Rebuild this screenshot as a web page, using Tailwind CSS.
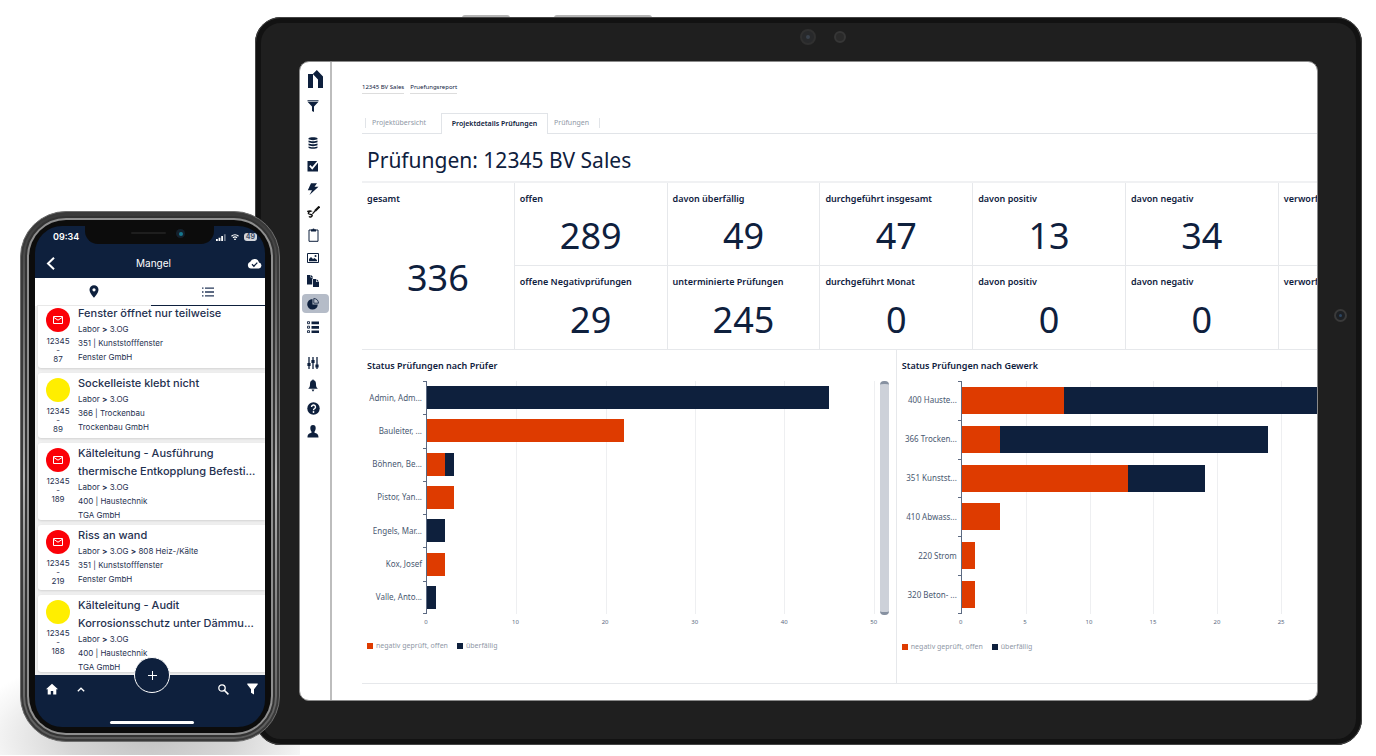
<!DOCTYPE html>
<html lang="de">
<head>
<meta charset="utf-8">
<meta name="viewport" content="width=device-width, initial-scale=1">
<title>Prüfungen: 12345 BV Sales</title>
<script src="https://cdn.jsdelivr.net/npm/@tailwindcss/browser@4"></script>
</head>
<body class="relative min-h-screen overflow-x-hidden bg-white text-[#0e203d] font-['Noto_Sans',sans-serif]">

<!-- Soft floor shadow below the phone -->
<div class="absolute left-0 top-[640px] h-[115px] w-[300px] bg-[radial-gradient(ellipse_62%_75%_at_50%_85%,#c4c4c4_0%,#d6d6d6_45%,#f6f6f6_85%,#ffffff_100%)]"></div>

<!-- Tablet -->
<section class="relative ml-[255px] mr-[14px] pt-[17px]" aria-label="Tablet">
  <div class="absolute left-[207px] top-[15px] h-[3px] w-[48px] rounded-t-sm bg-[#b5b5b5]"></div>
  <div class="absolute left-[299px] top-[15px] h-[3px] w-[98px] rounded-t-sm bg-[#b5b5b5]"></div>
  <div class="relative rounded-[26px] border-[6px] border-[#121212] bg-[#1f1f1f] px-[38px] py-[38px] outline outline-1 -outline-offset-1 outline-[#444444]">
    <div class="absolute left-[539px] top-[6px] size-4 rounded-full border-2 border-[#303030] bg-[#28292b] p-1"><div class="size-1 rounded-full bg-[#39414c]"></div></div>
    <div class="absolute left-[573px] top-[8px] size-3 rounded-full border-2 border-[#363636] bg-[#2a2a2a]"></div>
    <div class="absolute right-[9px] top-[286px] size-[13px] rounded-full border-2 border-[#3a3a3a] bg-[#1d2024] p-[3px]"><div class="size-[3px] rounded-full bg-[#2c4560]"></div></div>

    <div class="flex overflow-hidden rounded-[10px] border border-[#8a8a8a] bg-white">
      <!-- Icon rail -->
      <nav class="flex w-[32px] shrink-0 flex-col items-center border-r-2 border-[#bdbdbd] pt-[5px]" aria-label="Navigation">
        <a href="#" aria-label="Start" class="flex h-[24px] w-[27px] items-center justify-center"><svg class="h-[18px] w-[15px]" viewBox="0 0 15 18" fill="currentColor"><path d="M0 4h5v14H0zM4.800 4l4-4L15 6.500V18h-5V9.500z"/></svg></a>
        <button aria-label="Filter" class="flex h-[29px] w-[27px] items-center justify-center pr-1"><svg class="size-3" viewBox="0 0 12 12" fill="currentColor"><path d="M.5 0h11v1.200H.5z" opacity=".75"/><path d="M.5 1.700h11L7 6.500V12L5 11V6.500z"/></svg></button>
        <span class="h-[11px]"></span>
        <button aria-label="Datenbank" class="flex h-[23px] w-[27px] items-center justify-center pr-1"><svg class="h-3 w-[10px]" viewBox="0 0 10 12" fill="currentColor"><path d="M.5 1.300C2 0 8 0 9.500 1.300v1C8 3.400 2 3.400.5 2.300zM.5 3.500c2 1 7 1 9 0v1.800c-1.500 1.100-7.500 1.100-9 0zM.5 6.500c2 1 7 1 9 0v1.800c-1.500 1.100-7.500 1.100-9 0zM.5 9.400c2 1 7 1 9 0v1.300C8 12.200 2 12.200.5 10.700z"/></svg></button>
        <button aria-label="Aufgaben" class="flex h-[23px] w-[27px] items-center justify-center pr-1"><svg class="size-3" viewBox="0 0 12 12"><path d="M.5 1h10.500v10.500H.5z" fill="currentColor"/><path d="M2.800 5.700 5.200 8.300 11.500.8" fill="none" stroke="#fff" stroke-width="1.800"/></svg></button>
        <button aria-label="Aktionen" class="flex h-[23px] w-[27px] items-center justify-center pr-1"><svg class="size-3" viewBox="0 0 12 12" fill="currentColor"><path d="M4 .3h6L7.500 3.800H11.500L2.500 12 5 7.200H.8z"/></svg></button>
        <button aria-label="Unterschrift" class="flex h-[23px] w-[27px] items-center justify-center pr-1 text-[#111111]"><svg class="h-3 w-[13px]" viewBox="0 0 13 12" fill="none" stroke="currentColor"><path d="M12.500.5 8 5" stroke-width="2.200"/><path d="M8 5 5.500 7.800" stroke-width="1.200"/><path d="M.3 5c1.200.8 2-.4 3.500.2-2 .8-3.300 2-1.800 2.800s3.500.2 3.200 1.700-2.400 1.800-3.200.6" stroke-width="1.400"/></svg></button>
        <button aria-label="Klemmbrett" class="flex h-[23px] w-[27px] items-center justify-center pr-1"><svg class="h-[14px] w-[11px]" viewBox="0 0 11 14"><path d="M1 2h9v11.300H1z" fill="none" stroke="currentColor" stroke-width="1"/><path d="M3 3.500V1.500h1.500a1 1 0 0 1 2 0H8v2z" fill="currentColor"/></svg></button>
        <button aria-label="Bilder" class="flex h-[23px] w-[27px] items-center justify-center pr-1"><svg class="h-[10px] w-3" viewBox="0 0 12 10"><path d="M.5.5h11v9H.5z" fill="none" stroke="currentColor"/><path d="M2 8.200V6l2-2 2 2 1.500-1L10 7v1.200z" fill="currentColor"/><circle cx="8.500" cy="3" r="1" fill="currentColor"/></svg></button>
        <button aria-label="Dokumente" class="flex h-[23px] w-[27px] items-center justify-center pr-1"><svg class="size-3" viewBox="0 0 12 12" fill="currentColor"><path d="M0 0h3.500v2.500H6V3.500H5.200V9.500H0zM4 0l2 2H4z"/><path d="M6 4h3v3h3v5H6zM9.600 4 12 6.400H9.600z"/></svg></button>
        <button aria-label="Berichte" aria-current="page" class="flex h-[23px] w-[27px] items-center"><span class="flex h-[19px] w-[27px] items-center justify-center rounded-sm bg-[#b5bcc8] pr-1"><svg class="size-3" viewBox="0 0 12 12"><path d="M5.500 1a5.300 5.300 0 1 0 5.300 5.500H5.500z" fill="currentColor"/><path d="M6.800.5A5 5 0 0 1 11.500 5.200H6.800z" fill="#b5bcc8" stroke="currentColor" stroke-width=".8"/></svg></span></button>
        <button aria-label="Liste" class="flex h-[23px] w-[27px] items-center justify-center pr-1"><svg class="size-3" viewBox="0 0 12 12"><path d="M4.500.5H12v2.700H4.500zM4.500 5H12v2.700H4.500zM4.500 9.500H12V12H4.500z" fill="currentColor"/><path d="M.5.700h2v2h-2zM.5 5.200h2v2h-2zM.5 9.700h2v2h-2z" fill="none" stroke="currentColor" stroke-width=".9"/></svg></button>
        <span class="h-[13px]"></span>
        <button aria-label="Einstellungen" class="flex h-[23px] w-[27px] items-center justify-center pr-1"><svg class="size-3" viewBox="0 0 12 12"><path d="M2 0v12M6 0v12M10 0v12" stroke="currentColor" stroke-width="1.300"/><path d="M.4 6h3.200v3H.4zM4.400 3h3.200v3H4.400zM8.400 7.500h3.200v3H8.400z" fill="currentColor"/></svg></button>
        <button aria-label="Mitteilungen" class="flex h-[23px] w-[27px] items-center justify-center pr-1"><svg class="h-[13px] w-[10px]" viewBox="0 0 10 13" fill="currentColor"><path d="M5 0l.7 1.300C7.700 1.800 8 3.500 8 5.500s.5 3 1.800 4.300H.2C1.500 8.500 2 7.500 2 5.500s.3-3.700 2.300-4.200zM3.500 10.500h3L5 12.800z"/></svg></button>
        <button aria-label="Hilfe" class="flex h-[23px] w-[27px] items-center justify-center pr-1"><svg class="size-[13px]" viewBox="0 0 13 13"><circle cx="6.500" cy="6.500" r="6.200" fill="currentColor"/><path d="M4.500 5a2 2 0 1 1 3 1.700c-.8.400-1 .8-1 1.500" fill="none" stroke="#fff" stroke-width="1.400"/><circle cx="6.500" cy="10" r=".9" fill="#fff"/></svg></button>
        <button aria-label="Profil" class="flex h-[23px] w-[27px] items-center justify-center pr-1"><svg class="h-[13px] w-3" viewBox="0 0 12 13" fill="currentColor"><path d="M3.300 3a2.700 3 0 0 1 5.400 0c0 2-.7 2.800-1.200 3.700v1c2 .7 4 1 4 4.800H.5c0-3.800 2-4.100 4-4.800v-1C4 5.800 3.300 5 3.300 3z"/></svg></button>
      </nav>

      <!-- Report -->
      <main class="min-w-0 flex-1 overflow-hidden pb-[16px] pl-[30px] pt-[19px]">
        <div class="flex gap-[6px] text-[6px] leading-[12px] whitespace-nowrap">
          <a href="#" class="border-b border-[#dddddd]">12345 BV Sales</a>
          <a href="#" class="border-b border-[#dddddd]">Pruefungsreport</a>
        </div>
        <div class="mt-[19px] flex h-[21px] text-[7px] whitespace-nowrap text-[#8f98a6]" role="tablist">
          <button role="tab" class="flex w-[79px] items-center border-b border-[#e1e4e8] pl-[3px]"><span class="border-l border-[#e1e4e8] pl-[6px]">Projektübersicht</span></button>
          <button role="tab" aria-selected="true" class="w-[107px] border border-b-0 border-[#e1e4e8] font-semibold text-[#0e203d]">Projektdetails Prüfungen</button>
          <div class="flex flex-1 items-center border-b border-[#e1e4e8] pl-[6px]"><button role="tab" class="border-r border-[#e1e4e8] pr-[10px]">Prüfungen</button></div>
        </div>
        <h1 class="h-[47px] pl-[5px] pt-[5px] text-[21px] leading-[42px] whitespace-nowrap">Prüfungen: 12345 BV Sales</h1>

        <div class="grid grid-cols-[repeat(7,16%)] grid-rows-[83px_83px] border-t-2 border-[#f0f1f3]" id="kpis"></div>

        <div class="flex border-y border-[#e6e8eb]">
          <section class="w-[56%] shrink-0 border-r border-[#e6e8eb] pl-[5px] pr-[7px]">
            <h2 class="pt-[8px] text-[9px] leading-4 font-semibold">Status Prüfungen nach Prüfer</h2>
            <div class="mt-[7px] flex">
              <div class="mr-[6px] min-w-0 flex-1" id="chart-a"></div>
              <div class="h-[234px] w-[9px] rounded-sm border-y-[3px] border-[#8791a1] bg-[#cdd1d9]"></div>
            </div>
            <div class="mt-[10px] flex h-[42px] gap-[9px] text-[7px] leading-[12px] text-[#8f98a6]">
              <span class="flex h-3 items-center gap-[3px]"><i class="size-[6px] bg-[#de3b00]"></i>negativ geprüft, offen</span>
              <span class="flex h-3 items-center gap-[3px]"><i class="size-[6px] bg-[#0e203d]"></i>überfällig</span>
            </div>
          </section>
          <section class="min-w-0 flex-1 pl-[5px]">
            <h2 class="pt-[8px] text-[9px] leading-4 font-semibold">Status Prüfungen nach Gewerk</h2>
            <div class="mt-[7px]" id="chart-b"></div>
            <div class="mt-[11px] flex h-[42px] gap-[9px] text-[7px] leading-[12px] text-[#8f98a6]">
              <span class="flex h-3 items-center gap-[3px]"><i class="size-[6px] bg-[#de3b00]"></i>negativ geprüft, offen</span>
              <span class="flex h-3 items-center gap-[3px]"><i class="size-[6px] bg-[#0e203d]"></i>überfällig</span>
            </div>
          </section>
        </div>
      </main>
    </div>
  </div>
</section>

<!-- Phone, standing in front of the tablet -->
<section aria-label="Smartphone" class="absolute left-[20px] top-[211px] w-[260px] rounded-[46px] border border-[#6e6e6e] bg-[#3a3a3a] p-[2px] font-['Inter',sans-serif]">
 <div class="rounded-[43px] bg-linear-to-b from-[#3a3a3a] via-[#b4b4b4] to-[#5a5a5a] p-[2px]">
 <div class="rounded-[41px] border-2 border-[#333333] bg-[#8f8f8f] p-[2px]">
 <div class="rounded-[37px] bg-[#0c0c0c] p-[6px]">
  <div class="relative overflow-hidden rounded-[27px] bg-[#0e203d]">
    <div class="absolute left-[50px] top-0 h-[18px] w-[129px] rounded-b-[13px] bg-[#0c0c0c]">
      <div class="absolute left-[46px] top-[6px] h-[2px] w-[35px] rounded-full bg-[#1e1e1e]"></div>
      <div class="absolute left-[91px] top-[3px] flex size-[9px] items-center justify-center rounded-full bg-[#14202c]"><div class="size-1 rounded-full bg-[#16788f]"></div></div>
    </div>
    <div class="flex h-[22px] items-center justify-between pl-[18px] pr-[8px] text-white">
      <span class="text-[9px] font-semibold">09:34</span>
      <span class="flex items-center gap-[5px]">
        <svg class="h-[7px] w-[10px]" viewBox="0 0 10 7" fill="#fff"><path d="M0 5h1.800v2H0zM2.600 3.800h1.800V7H2.600zM5.200 2h1.800v5H5.200z"/><path d="M7.900.3h1.800V7H7.900z" opacity=".4"/></svg>
        <svg class="h-[6px] w-2" viewBox="0 0 8 6" fill="none" stroke="#fff"><path d="M.5 2.200a5 5 0 0 1 7 0M2 3.800a3 3 0 0 1 4 0" stroke-width="1.200"/><circle cx="4" cy="5.300" r=".5" fill="#fff"/></svg>
        <span class="rounded-[3px] bg-[#d3d6dc] px-[2px] text-[7px] leading-[8px] font-bold text-[#41506a]">49</span>
      </span>
    </div>
    <header class="flex h-[30px] items-center justify-between pl-[11px] pr-[3px] text-white">
      <button aria-label="Zurück"><svg class="h-[13px] w-[10px]" viewBox="0 0 10 13" fill="none" stroke="currentColor" stroke-width="2"><path d="M8 .8 2 6.500 8 12.200"/></svg></button>
      <h1 class="pl-1 text-[10px]">Mangel</h1>
      <button aria-label="Synchronisiert"><svg class="h-[11px] w-[15px]" viewBox="0 0 15 11"><path d="M4 10.500A3.500 3.500 0 0 1 3.300 3.700 4.600 4.600 0 0 1 12 4.600 3 3 0 0 1 12 10.500z" fill="#fff"/><path d="M5 6.300 6.900 8.200 10.300 4.600" fill="none" stroke="#0e203d" stroke-width="1.300"/></svg></button>
    </header>
    <div class="relative z-10 grid h-[28px] grid-cols-2 bg-white pl-[2px]" role="tablist">
      <button role="tab" aria-label="Karte" class="flex items-center justify-center border-b border-[#e8e8e8]"><svg class="h-[13px] w-[10px]" viewBox="0 0 10 13"><path d="M5 .3A4.500 4.500 0 0 0 .5 4.800C.5 8.200 5 12.700 5 12.700S9.500 8.200 9.500 4.800A4.500 4.500 0 0 0 5 .3z" fill="#0e203d"/><circle cx="5" cy="4.800" r="1.600" fill="#fff"/></svg></button>
      <button role="tab" aria-label="Liste" aria-selected="true" class="flex items-center justify-center border-b border-[#0e203d]"><svg class="h-[10px] w-3" viewBox="0 0 12 10"><path d="M3 1.200h9M3 5h9M3 8.800h9M0 1.200h1.500M0 5h1.500M0 8.800h1.500" stroke="#26395a" stroke-width="1.300"/></svg></button>
    </div>
    <ul class="-mt-[3px] flex h-[372px] flex-col gap-[5px] overflow-hidden bg-[#f0f0f0] pl-[3px]" id="defects"></ul>
    <footer class="relative flex h-[52px] justify-between pl-[11px] pr-[7px] pt-[8px] text-white">
      <span class="flex h-3 items-center gap-[19px]">
        <button aria-label="Start"><svg class="size-3" viewBox="0 0 12 12" fill="currentColor"><path d="M6 .8 0 6.300h1.700V11.500H4.800V8h2.400v3.500h3.100V6.300H12z"/></svg></button>
        <button aria-label="Mehr"><svg class="h-[5px] w-2" viewBox="0 0 8 5" fill="none" stroke="currentColor" stroke-width="1.300"><path d="M.8 4.300 4 1.200 7.200 4.300"/></svg></button>
      </span>
      <span class="flex h-3 items-center gap-[18px]">
        <button aria-label="Suchen"><svg class="size-[11px]" viewBox="0 0 11 11" fill="none" stroke="currentColor"><circle cx="4" cy="4" r="3.200" stroke-width="1.300"/><path d="M6.300 6.300 10.400 10.400" stroke-width="1.600"/></svg></button>
        <button aria-label="Filtern"><svg class="h-3 w-[11px]" viewBox="0 0 11 12" fill="currentColor"><path d="M.3.500h10.400v1L7 6.200V11.500L4 9.800V6.200L.3 1.500z"/></svg></button>
      </span>
      <button aria-label="Neuer Mangel" class="absolute left-[99px] -top-[18px] flex size-[36px] items-center justify-center rounded-full border border-white bg-[#0e203d]"><svg class="size-[9px]" viewBox="0 0 9 9" stroke="#fff" stroke-width="1"><path d="M4.500 0v9M0 4.500h9"/></svg></button>
      <div class="absolute bottom-[3px] left-[75px] h-[3px] w-[84px] rounded-full bg-white"></div>
    </footer>
  </div>
 </div></div></div>
</section>

<script>
// Key figures: label, value; the first one spans both rows
const kpis = [['gesamt','336'],['offen','289'],['davon überfällig','49'],['durchgeführt insgesamt','47'],['davon positiv','13'],['davon negativ','34'],['verworfen',''],
  ['offene Negativprüfungen','29'],['unterminierte Prüfungen','245'],['durchgeführt Monat','0'],['davon positiv','0'],['davon negativ','0'],['verworfen','']];
document.getElementById('kpis').innerHTML = kpis.map(([label, value], i) => `
  <div class="flex flex-col border-r border-[#e6e8eb] pl-[5px] pt-[8px] whitespace-nowrap ${i === 0 ? 'row-span-2' : ''} ${i > 0 && i < 7 ? 'border-b' : ''}">
    <h3 class="text-[9px] leading-4 font-semibold">${label}</h3>
    <p class="flex flex-1 items-center justify-center pr-[5px] text-[36px] leading-[44px]">${value}</p>
  </div>`).join('');

// Horizontal stacked bar chart; rows are [label, negative, overdue]
function chart(id, rows, max, step, barClass) {
  const ticks = [];
  for (let v = 0; v <= max; v += step) ticks.push(v);
  const pos = v => `left:${v / max * 100}%`;
  document.getElementById(id).innerHTML = `
    <div class="relative ml-[59px] h-[233px] border-l border-[#5c6a82]">
      ${ticks.slice(1).map(v => `<div class="absolute inset-y-0 w-px bg-[#eeeff1]" style="${pos(v)}"></div>`).join('')}
      <div class="relative -ml-[60px] flex h-full flex-col">
        ${rows.map(([label, neg, due]) => `
        <div class="flex flex-1 items-center">
          <span class="w-[56px] pr-[1px] text-right text-[8px] leading-[12px] whitespace-nowrap text-[#4a5971]">${label}</span>
          <span class="flex w-[4px] self-stretch border-t border-[#5c6a82]"></span>
          <div class="flex min-w-0 flex-1 ${barClass}">
            <div class="shrink-0 bg-[#de3b00]" style="width:${neg / max * 100}%"></div>
            <div class="shrink-0 bg-[#0e203d]" style="width:${due / max * 100}%"></div>
          </div>
        </div>`).join('')}
      </div>
      <div class="absolute -left-[4px] bottom-0 h-px w-[4px] bg-[#5c6a82]"></div>
    </div>
    <div class="relative ml-[59px] h-[16px] text-[6px] leading-[16px] text-[#5c6a82]">
      ${ticks.map(v => `<span class="absolute -translate-x-1/2" style="${pos(v)}">${v}</span>`).join('')}
    </div>`;
}
chart('chart-a', [['Admin, Adm...',0,45],['Bauleiter, ...',22,0],['Böhnen, Be...',2,1],['Pistor, Yan...',3,0],['Engels, Mar...',0,2],['Kox, Josef',2,0],['Valle, Anto...',0,1]], 50, 10, 'h-[23px]');
chart('chart-b', [['400 Hauste...',8,22],['366 Trocken...',3,21],['351 Kunstst...',13,6],['410 Abwass...',3,0],['220 Strom',1,0],['320 Beton- ...',1,0]], 27.8, 5, 'h-[27px]');

// Defect list
const mail = '<svg class="h-2 w-[10px]" viewBox="0 0 10 8" fill="none" stroke="#fff"><path d="M.5.5h9v7h-9zM.5 1.200 5 4.200 9.500 1.200"/></svg>';
const defects = [
  [true,'87',['Fenster öffnet nur teilweise'],'Labor <b>&gt;</b> 3.OG','351 | Kunststofffenster','Fenster GmbH'],
  [false,'89',['Sockelleiste klebt nicht'],'Labor <b>&gt;</b> 3.OG','366 | Trockenbau','Trockenbau GmbH'],
  [true,'189',['Kälteleitung - Ausführung','thermische Entkopplung Befesti...'],'Labor <b>&gt;</b> 3.OG','400 | Haustechnik','TGA GmbH'],
  [true,'219',['Riss an wand'],'Labor <b>&gt;</b> 3.OG <b>&gt;</b> 808 Heiz-/Kälte','351 | Kunststofffenster','Fenster GmbH'],
  [false,'188',['Kälteleitung - Audit','Korrosionsschutz unter Dämmu...'],'Labor <b>&gt;</b> 3.OG','400 | Haustechnik','TGA GmbH']];
document.getElementById('defects').innerHTML = defects.map(([open, nr, title, ...lines]) => `
  <li class="flex shrink-0 rounded-l-[3px] bg-white shadow-sm ${title.length > 1 ? 'h-[77px]' : 'h-[65px]'}">
    <div class="flex w-[40px] shrink-0 flex-col items-center pt-[5px] text-center text-[8px] leading-[9px] text-[#1f3150]">
      <span class="mb-[5px] flex size-6 shrink-0 items-center justify-center rounded-full ${open ? 'bg-[#fb0007]' : 'bg-[#ffee00]'}">${open ? mail : ''}</span>
      <span>12345</span><span>-</span><span>${nr}</span>
    </div>
    <div class="pt-[1px] text-[8px] leading-[14px] whitespace-nowrap text-[#1f3150]">
      <h2 class="text-[11px] leading-[18px] font-medium">${title.join('<br>')}</h2>
      ${lines.map(l => `<p>${l}</p>`).join('')}
    </div>
  </li>`).join('');
</script>
</body>
</html>
